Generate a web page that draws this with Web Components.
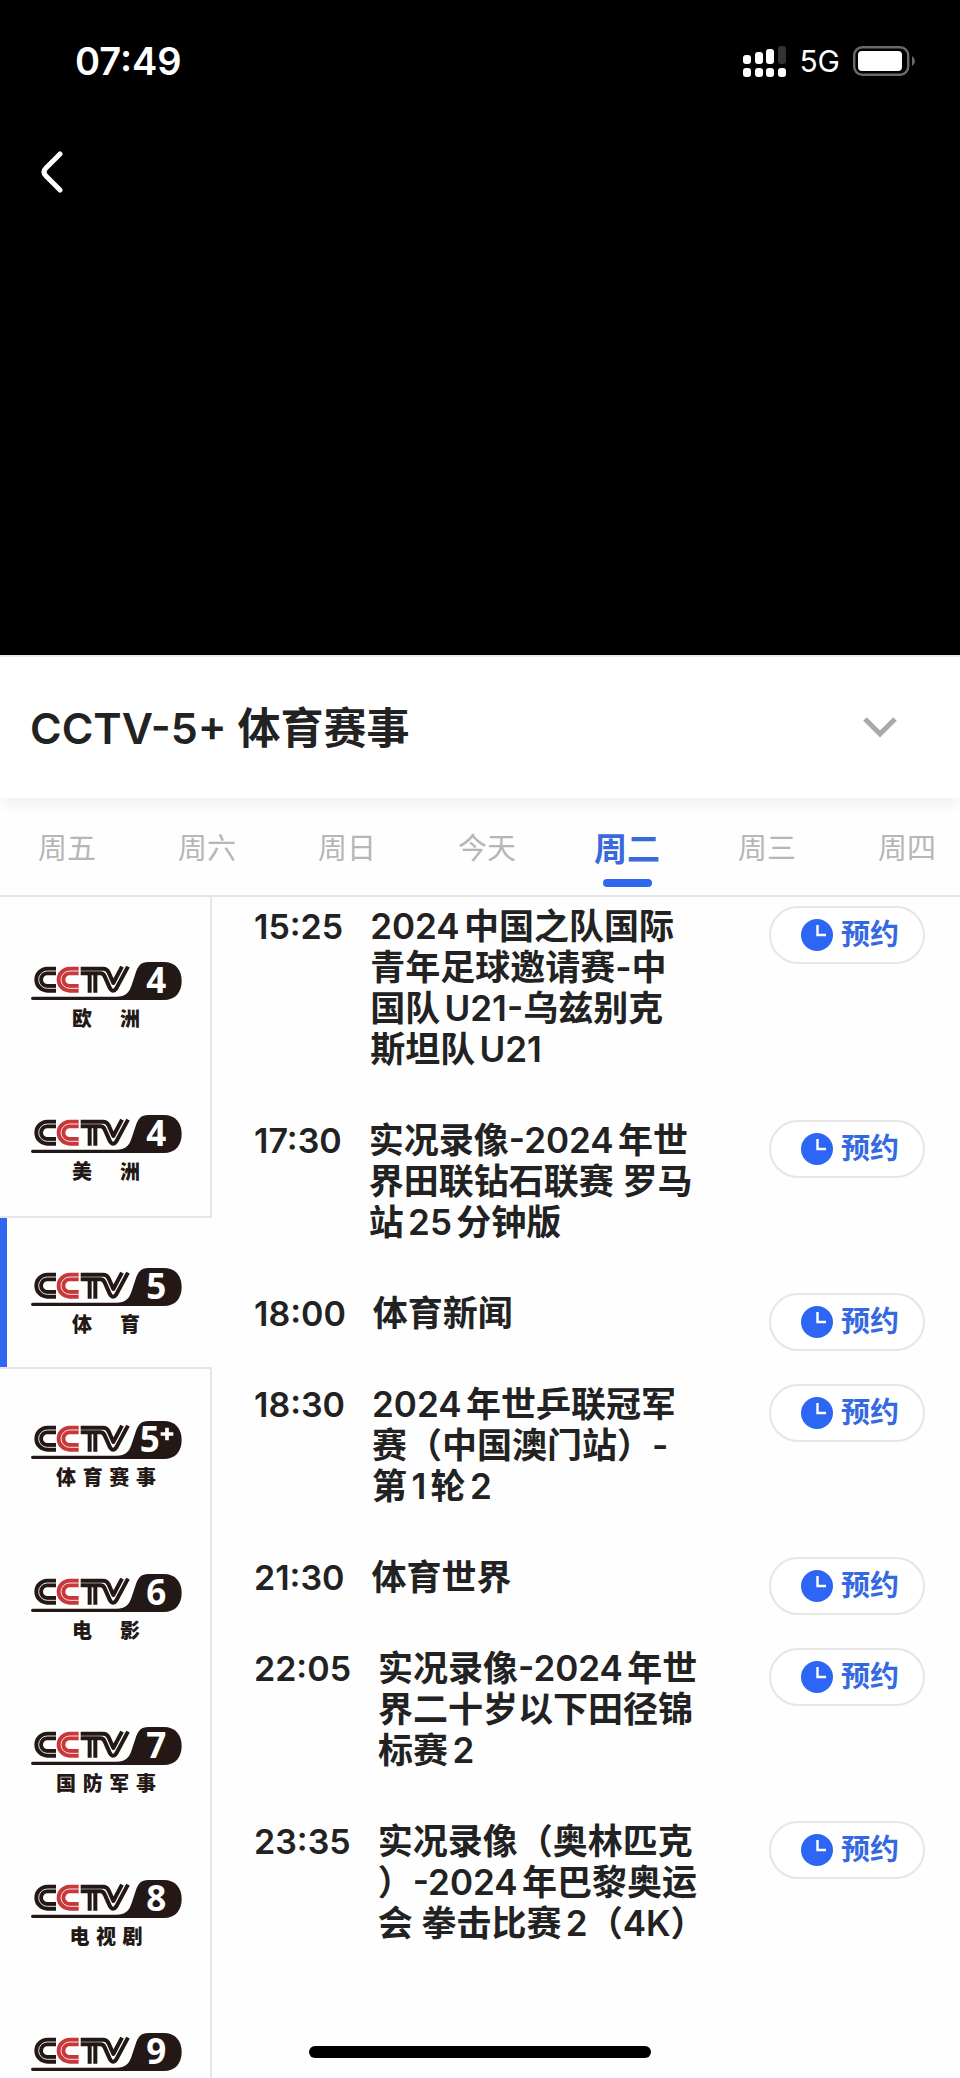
<!DOCTYPE html>
<html lang="zh-CN">
<head>
<meta charset="utf-8">
<meta name="viewport" content="width=device-width, initial-scale=1">
<title>CCTV-5+ 体育赛事</title>
<style>
  html, body { margin: 0; height: 100%; }
  body {
    font-family: Inter, "Noto Sans CJK SC", sans-serif;
    font-weight: 600;
    color: #222;
    background: #fefefe;
    text-autospace: normal;
    --blue: #2f66f2;
    --line: #e6e6e6;
  }
</style>
</head>
<body>
<tv-app>
  <video-area slot="video"><status-bar time="07:49" network="5G"></status-bar></video-area>
  <channel-header slot="header">CCTV-5+ 体育赛事</channel-header>
  <day-tabs slot="days">
    <day-tab>周五</day-tab>
    <day-tab>周六</day-tab>
    <day-tab>周日</day-tab>
    <day-tab>今天</day-tab>
    <day-tab active>周二</day-tab>
    <day-tab>周三</day-tab>
    <day-tab>周四</day-tab>
  </day-tabs>
  <channel-list slot="channels">
    <channel-item number="4" name="欧洲"></channel-item>
    <channel-item number="4" name="美洲" class="before"></channel-item>
    <channel-item number="5" name="体育" active></channel-item>
    <channel-item number="5" plus name="体育赛事" class="after"></channel-item>
    <channel-item number="6" name="电影"></channel-item>
    <channel-item number="7" name="国防军事"></channel-item>
    <channel-item number="8" name="电视剧"></channel-item>
    <channel-item number="9"></channel-item>
  </channel-list>
  <program-list slot="programs">
    <program-row time="15:25">2024中国之队国际<br>青年足球邀请赛-中<br>国队U21-乌兹别克<br>斯坦队U21</program-row>
    <program-row time="17:30">实况录像-2024年世<br>界田联钻石联赛 罗马<br>站25分钟版</program-row>
    <program-row time="18:00">体育新闻</program-row>
    <program-row time="18:30">2024年世乒联冠军<br>赛（中国澳门站）-<br>第1轮2</program-row>
    <program-row time="21:30">体育世界</program-row>
    <program-row time="22:05">实况录像-2024年世<br>界二十岁以下田径锦<br>标赛2</program-row>
    <program-row time="23:35">实况录像（奥林匹克<br>）-2024年巴黎奥运<br>会 拳击比赛2（4K）</program-row>
  </program-list>
</tv-app>

<script>
  const mount = (el, html) => { el.attachShadow({ mode: 'open' }).innerHTML = html; };

  customElements.define('tv-app', class extends HTMLElement {
    constructor() {
      super();
      mount(this, `
        <style>
          :host { display: flex; flex-direction: column; height: 100vh; overflow: hidden; }
          .guide { flex: 1; min-height: 0; display: grid; grid-template-columns: 212px 1fr; border-top: 2px solid var(--line); }
          .home { position: fixed; left: 50%; bottom: 20px; width: 342px; height: 12px; margin-left: -171px; border-radius: 6px; background: #000; }
        </style>
        <slot name="video"></slot>
        <slot name="header"></slot>
        <slot name="days"></slot>
        <main class="guide">
          <slot name="channels"></slot>
          <slot name="programs"></slot>
        </main>
        <div class="home"></div>`);
    }
  });

  customElements.define('video-area', class extends HTMLElement {
    constructor() {
      super();
      mount(this, `
        <style>
          :host { display: block; flex: none; height: 655px; background: #000; color: #fff; }
          button { display: block; margin: 26px 0 0 28px; padding: 12px; border: 0; background: none; line-height: 0; }
        </style>
        <slot></slot>
        <button aria-label="返回">
          <svg width="24" height="44" viewBox="0 0 24 44" fill="none" stroke="#fff" stroke-width="5" stroke-linecap="round" stroke-linejoin="round"><path d="M20 4 L6 18 Q2 22 6 26 L20 40"/></svg>
        </button>`);
    }
  });

  customElements.define('status-bar', class extends HTMLElement {
    constructor() {
      super();
      mount(this, `
        <style>
          :host { display: flex; justify-content: space-between; align-items: center; height: 46px; padding: 38px 44px 28px 75px; }
          time { font-size: 38px; font-weight: 600; }
          .right { display: flex; align-items: center; gap: 13px; font-size: 30px; font-weight: 400; }
          svg { display: block; }
        </style>
        <time>${this.getAttribute('time')}</time>
        <div class="right">
          <svg width="43" height="32" viewBox="0 0 43 32" fill="#fff">
            <rect x="0" y="10" width="8" height="9" rx="3"/><rect x="12" y="7" width="8" height="12" rx="3"/>
            <rect x="23" y="4" width="8" height="15" rx="3"/><rect x="35" y="1" width="8" height="18" rx="3" fill="#333"/>
            <rect x="0" y="23" width="8" height="9" rx="3"/><rect x="12" y="23" width="8" height="9" rx="3"/>
            <rect x="23" y="23" width="8" height="9" rx="3"/><rect x="35" y="23" width="8" height="9" rx="3"/>
          </svg>
          <span>${this.getAttribute('network')}</span>
          <svg width="63" height="30" viewBox="0 0 63 30">
            <rect x="1.2" y="1.2" width="54" height="27.6" rx="8" fill="none" stroke="#6a6a6a" stroke-width="2.4"/>
            <rect x="5" y="5" width="44" height="20" rx="4" fill="#fff"/>
            <path d="M59 10 Q62 12 62 15 T59 20 Z" fill="#6a6a6a"/>
          </svg>
        </div>`);
    }
  });

  customElements.define('channel-header', class extends HTMLElement {
    constructor() {
      super();
      mount(this, `
        <style>
          :host { display: flex; flex: none; align-items: center; justify-content: space-between; box-sizing: border-box;
            height: 143px; padding: 0 53px 0 30px; border-top: 2px solid #e9e9e9; background: #fff;
            box-shadow: 0 12px 12px -4px rgba(0,0,0,.05); }
          h1 { margin: 0; font-size: 43px; line-height: 60px; font-weight: 600; }
          button { padding: 10px; border: 0; background: none; line-height: 0; }
        </style>
        <h1><slot></slot></h1>
        <button aria-label="展开">
          <svg width="34" height="22" viewBox="0 0 34 22" fill="none" stroke="#a9a9a9" stroke-width="5"><path d="M2 2 L17 17 L32 2"/></svg>
        </button>`);
    }
  });

  customElements.define('day-tabs', class extends HTMLElement {
    constructor() {
      super();
      mount(this, `
        <style>
          :host { display: block; flex: none; overflow: hidden; padding-top: 21px; }
          nav { display: flex; margin-left: -3px; }
        </style>
        <nav><slot></slot></nav>`);
    }
  });

  customElements.define('day-tab', class extends HTMLElement {
    constructor() {
      super();
      mount(this, `
        <style>
          :host { flex: 0 0 140px; }
          button { display: flex; flex-direction: column; align-items: center; width: 100%; height: 76px; padding: 0;
            border: 0; background: none; font: inherit; font-size: 29px; font-weight: 400; line-height: 60px; color: #b6b6b6; }
          :host([active]) button { font-size: 33px; font-weight: 600; color: #3a68dd; }
          :host([active]) button::after { content: ""; width: 49px; height: 8px; border-radius: 4px; background: var(--blue); }
        </style>
        <button><slot></slot></button>`);
    }
  });

  customElements.define('channel-list', class extends HTMLElement {
    constructor() {
      super();
      mount(this, `
        <style>
          :host { display: flex; flex-direction: column; min-height: 0; overflow: hidden; }
          .lead { flex: none; height: 15px; border-right: 2px solid var(--line); box-sizing: border-box; }
        </style>
        <div class="lead"></div>
        <slot></slot>`);
    }
  });

  customElements.define('channel-item', class extends HTMLElement {
    constructor() {
      super();
      const n = this.getAttribute('number');
      const name = this.getAttribute('name') || '';
      const plus = this.hasAttribute('plus');
      mount(this, `
        <style>
          :host { display: block; flex: none; box-sizing: border-box; height: 153px; border-right: 2px solid var(--line); }
          :host(.before) { border-bottom: 2px solid var(--line); }
          :host([active]) { height: 149px; border-right: 0; }
          :host(.after) { height: 157px; padding-top: 2px; border-top: 2px solid var(--line); }
          button { display: flex; flex-direction: column; align-items: center; box-sizing: border-box; width: 100%; height: 100%;
            padding: 50px 0 0 2px; border: 0; background: none; font: inherit; color: #231815; }
          :host([active]) button { border-left: 7px solid var(--blue); padding: 50px 7px 0 0; }
          svg { display: block; flex: none; overflow: visible; }
          .name { width: 68px; margin-top: 4px; font-size: 20px; line-height: 30px; font-weight: 900; text-align: justify; text-align-last: justify; }
          .c3 { width: 73px; }
          .c4 { width: 100px; }
        </style>
        <button aria-label="CCTV-${n}${plus ? '+' : ''} ${name}">
          <svg width="151" height="38" viewBox="0 0 453 114" aria-hidden="true">
            <g fill="none" stroke="#231815" stroke-width="26">
              <path d="M75 27 H49 A26 26 0 0 0 49 79 H75"/>
              <path d="M143 27 H116 A26 26 0 0 0 116 79 H143" stroke="#c8373a"/>
            </g>
            <g fill="none" stroke="#fff" stroke-width="2.6">
              <path d="M75 27 H49 A26 26 0 0 0 49 79 H75"/>
              <path d="M143 27 H116 A26 26 0 0 0 116 79 H143"/>
            </g>
            <g fill="none" stroke="#231815" stroke-width="12" stroke-linejoin="round">
              <path d="M149 20 H216 Q228 20 233 31 L247 63 L273 14"/>
              <path d="M149 34 H208 Q217 34 221 43 L237 79 Q246 94 256 79 L291 14"/>
              <path d="M176 34 V92 M193 34 V92"/>
            </g>
            <path fill="#231815" d="M5 104 H256 C284 104 294 92 301 72 L313 36 C321 10 330 0 352 0 H398 C434 0 452 24 452 57 C452 90 434 114 398 114 H5 a5 5 0 0 1 0 -10 z"/>
            <text x="${plus ? 356 : 376}" y="94" text-anchor="middle" fill="#fff" font-family="Open Sans, sans-serif" font-weight="700" font-size="105">${n}</text>
            ${plus ? '<path d="M408 20 V58 M389 39 H427" stroke="#fff" stroke-width="11"/>' : ''}
          </svg>
          ${name && `<span class="name c${name.length}">${name}</span>`}
        </button>`);
    }
  });

  customElements.define('program-list', class extends HTMLElement {
    constructor() {
      super();
      mount(this, `
        <style>
          :host { display: flex; flex-direction: column; gap: 33px; min-height: 0; overflow: hidden; padding: 9px 35px 0 42px; }
        </style>
        <slot></slot>`);
    }
  });

  customElements.define('program-row', class extends HTMLElement {
    constructor() {
      super();
      mount(this, `
        <style>
          :host { display: flex; flex: none; align-items: flex-start; font-size: 35px; line-height: 41px; }
          time { margin-right: 27px; font-size: 34px; }
          .title { flex: 1; padding-bottom: 17px; }
        </style>
        <time>${this.getAttribute('time')}</time>
        <span class="title"><slot></slot></span>
        <reserve-button></reserve-button>`);
    }
  });

  customElements.define('reserve-button', class extends HTMLElement {
    constructor() {
      super();
      mount(this, `
        <style>
          :host { display: block; flex: none; }
          button { display: flex; align-items: center; gap: 8px; box-sizing: border-box; width: 156px; height: 58px; padding: 0 0 0 30px;
            border: 2px solid var(--line); border-radius: 29px; background: #fff; font: inherit; font-size: 29px; line-height: 40px; color: #3469e2; }
          svg { display: block; }
        </style>
        <button>
          <svg width="32" height="32" viewBox="0 0 32 32"><circle cx="16" cy="16" r="16" fill="#2d66f4"/><path d="M16.5 6 V16 H25" fill="none" stroke="#fff" stroke-width="2.4"/></svg>
          <span>预约</span>
        </button>`);
    }
  });
</script>
</body>
</html>
